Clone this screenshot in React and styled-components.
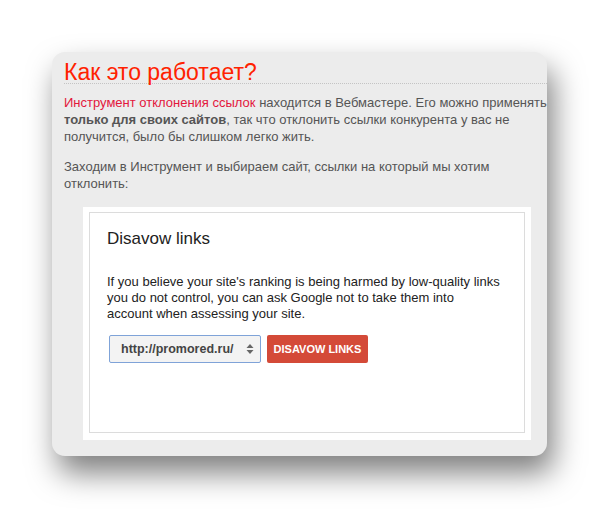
import React from "react";
import styled, { createGlobalStyle } from "styled-components";

const Global = createGlobalStyle`
  html, body {
    margin: 0;
    background: #fff;
    font-family: "Liberation Sans", Arial, sans-serif;
  }
`;

const Page = styled.div`
  min-height: 509px;
  box-sizing: border-box;
  padding: 52px 0 0 52px;
`;

const Card = styled.div`
  width: 495px;
  box-sizing: border-box;
  padding: 9px 0 16px 12px;
  background: #ececec;
  border-radius: 13px;
  box-shadow: 6px 17px 30px rgba(0, 0, 0, 0.5);
`;

const Heading = styled.h2`
  margin: 0;
  font-size: 23px;
  line-height: 22px;
  font-weight: normal;
  color: #ff2200;
  border-bottom: 1px dotted #c4c4c4;
`;

const Text = styled.p`
  margin: ${(p) => p.$top}px 0 0;
  font-size: 13px;
  line-height: 17px;
  color: #555;
`;

const Link = styled.span`
  color: #e3173c;
`;

const Shot = styled.div`
  margin: 15px 0 0 19px;
  width: 448px;
  box-sizing: border-box;
  padding: 5px 6px 7px 6px;
  background: #fff;
`;

const Frame = styled.div`
  height: 221px;
  box-sizing: border-box;
  border: 1px solid #dcdcdc;
  padding: 16px 19px 0 17px;
`;

const Title = styled.h3`
  margin: 0;
  font-size: 17px;
  line-height: 20px;
  font-weight: normal;
  color: #222;
`;

const Info = styled.p`
  margin: 25px 0 0;
  max-width: 394px;
  font-size: 13px;
  line-height: 16px;
  color: #222;
`;

const Controls = styled.div`
  display: flex;
  gap: 6px;
  margin-top: 13px;
  margin-left: 2px;
`;

const Select = styled.div`
  width: 152px;
  height: 28px;
  box-sizing: border-box;
  border: 1px solid #7fa3d8;
  border-radius: 2px;
  background: #f3f3f3;
  display: flex;
  align-items: center;
  justify-content: space-between;
  padding: 0 6px 0 11px;
  font-size: 12.5px;
  font-weight: bold;
  color: #444;
`;

const Button = styled.div`
  width: 101px;
  height: 28px;
  border-radius: 2px;
  background: #d44a38;
  color: #fff;
  font-size: 11px;
  font-weight: bold;
  display: flex;
  align-items: center;
  justify-content: center;
`;

const Arrows = () => (
  <svg width="8" height="12" viewBox="0 0 8 12">
    <path d="M4 1 L7.5 5 H0.5 Z M4 11 L7.5 7 H0.5 Z" fill="#666" />
  </svg>
);

export default function App() {
  return (
    <Page>
      <Global />
      <Card>
        <Heading>Как это работает?</Heading>
        <Text $top={10}>
          <Link>Инструмент отклонения ссылок</Link> находится в Вебмастере. Его можно применять{" "}
          <b>только для своих сайтов</b>, так что отклонить ссылки конкурента у вас не
          получится, было бы слишком легко жить.
        </Text>
        <Text $top={13}>
          Заходим в Инструмент и выбираем сайт, ссылки на который мы хотим отклонить:
        </Text>
        <Shot>
          <Frame>
            <Title>Disavow links</Title>
            <Info>
              If you believe your site's ranking is being harmed by low-quality links you do
              not control, you can ask Google not to take them into account when assessing
              your site.
            </Info>
            <Controls>
              <Select>
                http://promored.ru/
                <Arrows />
              </Select>
              <Button>DISAVOW LINKS</Button>
            </Controls>
          </Frame>
        </Shot>
      </Card>
    </Page>
  );
}
